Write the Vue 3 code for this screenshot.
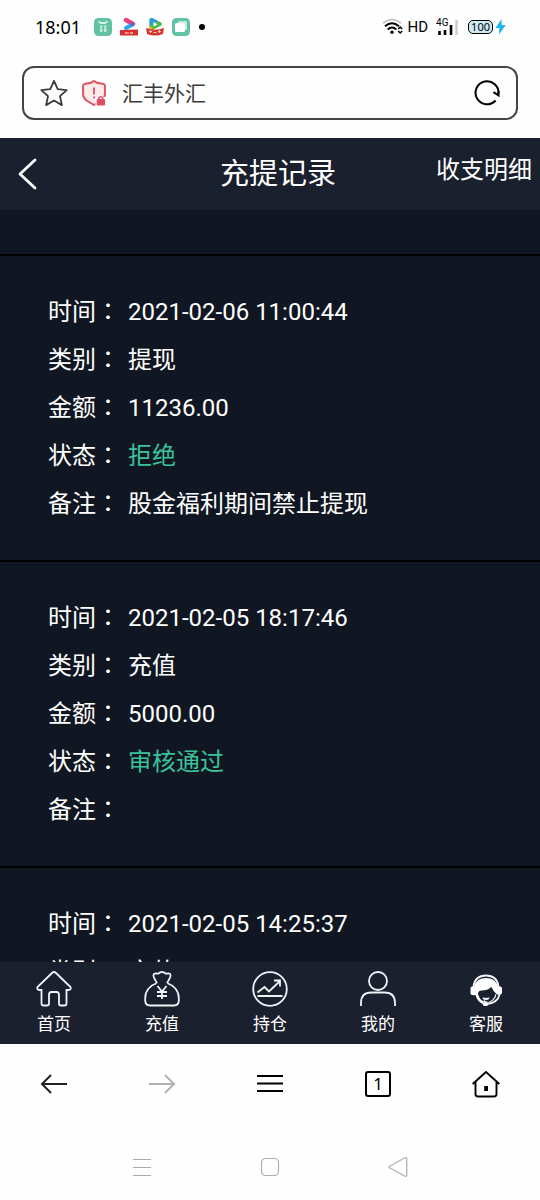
<script setup>
const records = [
  { time: '2021-02-06 11:00:44', type: '提现', amount: '11236.00', status: '拒绝', note: '股金福利期间禁止提现' },
  { time: '2021-02-05 18:17:46', type: '充值', amount: '5000.00', status: '审核通过', note: '' },
  { time: '2021-02-05 14:25:37', type: '充值' }
]

const fields = [
  { key: 'time', label: '时间' },
  { key: 'type', label: '类别' },
  { key: 'amount', label: '金额' },
  { key: 'status', label: '状态' },
  { key: 'note', label: '备注' }
]

const fieldsOf = (record) => fields.filter((field) => field.key in record)
</script>

<template>
  <div class="screen">
    <header class="status">
      <time class="clock">18:01</time>
      <div class="notices">
        <svg width="20" height="20" viewBox="0 0 20 20" aria-hidden="true">
          <rect x="1" y="1" width="18" height="18" rx="4.500" fill="#62c3a2" />
          <path d="M5.500 4.500l2.500 1.500h4l2.500-1.500" fill="none" stroke="#fff" stroke-width="1.300" />
          <path d="M7 9.500h2.500M11 9.500h2.500M7 12h2.500M11 12h2.500M7 14h2.500M11 14h2.500" stroke="#e4f6ef" stroke-width="1.400" />
        </svg>
        <svg width="20" height="20" viewBox="0 0 20 20" aria-hidden="true">
          <path d="M7 3l7 4" stroke="#ed3e78" stroke-width="4.500" stroke-linecap="round" />
          <path d="M13.500 7.500L7 11" stroke="#2aa5ee" stroke-width="4" stroke-linecap="round" />
          <path d="M11.500 5l4 2-3.500 2.500z" fill="#8a48c8" />
          <path d="M1 13l18-.5v6H1z" fill="#d3302f" />
          <path d="M6 16h2M9 15v2M11 16h3" stroke="#f6b9a8" stroke-width="1.300" />
        </svg>
        <svg width="20" height="20" viewBox="0 0 20 20" aria-hidden="true">
          <path d="M4.500 3q0-2.500 2.500-2l9 4.500q2 1.500 0 3l-9 5q-2.500.5-2.500-2z" fill="#51b84c" />
          <path d="M4.500 3q0-2.500 2.500-2l6 3-8.500 5z" fill="#2c9bdd" />
          <path d="M4.500 8l4 4.500-1.500 1q-2.500.5-2.500-2z" fill="#f5a422" />
          <path d="M8.500 5l4 2.200-4 2.300z" fill="#fff" />
          <path d="M1 11q9 3.500 18 0l-1 6q-8 3-16 0z" fill="#d5382d" />
          <path d="M4 14.500h3M8.500 15.500h3M13 14.500h3M5.500 13v3M14.500 13v3" stroke="#f8c7b5" stroke-width="1" />
        </svg>
        <svg width="20" height="20" viewBox="0 0 20 20" aria-hidden="true">
          <rect x="1" y="1" width="18" height="18" rx="4.500" fill="#62c3a2" />
          <rect x="7" y="4" width="9" height="9" rx="1.500" fill="#c8ebdd" />
          <rect x="4" y="6" width="10" height="9" rx="1.500" fill="#fff" />
        </svg>
        <i class="dot"></i>
      </div>
      <div class="signals">
        <svg width="22" height="18" viewBox="0 0 22 18" aria-hidden="true">
          <path d="M1 5q9-7 18 0" fill="none" stroke="#c8c8c8" stroke-width="1.800" />
          <path d="M3 8.200q7-6 14 0M5.700 11.500q4.300-4 8.600 0" fill="none" stroke="#000" stroke-width="2" />
          <circle cx="10" cy="14.300" r="1.700" />
          <path d="M16.200 11l2-2 2 2M16.200 13l2 2 2-2" fill="none" stroke="#000" stroke-width="1.500" />
        </svg>
        <span class="hd">HD</span>
        <span class="cell">
          <span class="gen">4G</span>
          <svg width="22" height="18" viewBox="0 0 22 18" aria-hidden="true">
            <path d="M3.500 17v-4M9 17v-5M15 17V7" stroke="#000" stroke-width="2.600" />
            <path d="M20.500 17V2" stroke="#ccc" stroke-width="2.400" />
          </svg>
        </span>
        <span class="power">
          <span class="battery">100</span>
          <svg width="11" height="16" viewBox="0 0 11 16" aria-hidden="true">
            <path d="M6.500 0L.5 9h3.800L4 15.500 10.800 6H6.700z" fill="#1fb6ee" />
          </svg>
        </span>
      </div>
    </header>

    <form class="address" @submit.prevent>
      <button type="button" class="plain" aria-label="收藏">
        <svg width="28" height="28" viewBox="0 0 28 28">
          <path d="M14 1.800l3.700 8.300 9 1-6.700 6.100 1.900 8.900-7.900-4.600-7.900 4.600L8 17.200 1.300 11.100l9-1z" fill="none" stroke="#3b3b3b" stroke-width="1.800" stroke-linejoin="round" />
        </svg>
      </button>
      <button type="button" class="plain shield" aria-label="网站安全信息">
        <svg width="24" height="26" viewBox="0 0 24 26">
          <path d="M12 1l3 1.700 6.500 1.300q1.500.3 1.400 2v8.500q-.2 3.500-3.500 5.500L12 25l-7.500-4.500Q1.300 18 1.100 14.500V6q0-1.700 1.500-2L9 2.700z" fill="#fdebec" stroke="#dd5364" stroke-width="2" />
          <path d="M12 7.500v7M12 16.500v2" stroke="#dd5364" stroke-width="1.800" />
          <rect x="13.500" y="17" width="10.500" height="9" fill="#fff" />
          <rect x="14.700" y="19" width="8.300" height="6.500" rx="1" fill="#e14c60" />
          <path d="M16.700 20v-2q2-2.500 4 0v2" fill="none" stroke="#e14c60" stroke-width="1.600" />
        </svg>
      </button>
      <input class="url" type="text" value="汇丰外汇" aria-label="网址" />
      <button type="button" class="plain" aria-label="刷新">
        <svg width="28" height="28" viewBox="0 0 28 28">
          <path d="M22.600 21.500A11.500 11.500 0 1 1 25.500 15" fill="none" stroke="#000" stroke-width="2" />
          <path d="M20.500 13.200l5 3.300V12" fill="none" stroke="#000" stroke-width="2" />
        </svg>
      </button>
    </form>

    <div class="titlebar">
      <button type="button" class="plain back" aria-label="返回">
        <svg width="20" height="32" viewBox="0 0 20 32">
          <path d="M17 2L2 16l15 14" fill="none" stroke="#fff" stroke-width="2.800" stroke-linecap="round" stroke-linejoin="round" />
        </svg>
      </button>
      <h1 class="title">充提记录</h1>
      <a class="detail" href="#">收支明细</a>
    </div>

    <main class="list">
      <dl v-for="record in records" :key="record.time" class="record">
        <div v-for="field in fieldsOf(record)" :key="field.key" class="row">
          <dt>{{ field.label }}<span class="colon">：</span></dt>
          <dd :class="{ state: field.key === 'status' }">{{ record[field.key] }}</dd>
        </div>
      </dl>
    </main>

    <nav class="tabs" aria-label="主导航">
      <a href="#">
        <svg width="36" height="36" viewBox="0 0 36 36">
          <path d="M18 1q1 0 2 1L34.500 16q1 3-2 3h-2v13.500q0 2-2 2H25q-2 0-2-2V24q0-3-2.500-3h-5Q13 21 13 24v8.500q0 2-2 2H7.500q-2 0-2-2V19h-2q-3 0-2-3L16 2q1-1 2-1z" />
        </svg>
        <span>首页</span>
      </a>
      <a href="#">
        <svg width="36" height="36" viewBox="0 0 36 36">
          <path d="M13 12C11 8.500 9 6 9.500 4q.5-2 3-1.500 1 .2 2 0Q16 1 18 1t3.500 1.500q1 .2 2 0 2.500-.5 3 1.500c.5 2-1.500 4.500-3.500 8M13 12C6 14.500 1.200 20 1.200 27v2.500q0 5 5 5h23.600q5 0 5-5V27c0-7-4.800-12.500-11.800-15" />
          <path d="M13.500 15L18 20.500l4.500-5.500M18 20.500V28M13 21h10M13 25h10" />
        </svg>
        <span>充值</span>
      </a>
      <a href="#">
        <svg width="36" height="36" viewBox="0 0 36 36">
          <circle cx="18" cy="18" r="16.800" />
          <path d="M5.500 21.500l7-5.500 4.500 4.500L28 10M22 9.500h6v6M5.500 25h25" />
        </svg>
        <span>持仓</span>
      </a>
      <a href="#">
        <svg width="36" height="36" viewBox="0 0 36 36">
          <circle cx="18" cy="10" r="9" />
          <path d="M1 35v-3q0-10.500 10.500-10.500h13Q35 21.500 35 32v3" />
        </svg>
        <span>我的</span>
      </a>
      <a href="#">
        <svg width="36" height="36" viewBox="0 0 36 36">
          <path d="M5.500 15.500Q7 4.500 18 4.500T30.500 15.500" />
          <path class="solid" d="M6.500 15Q8.500 7 18 7t11.500 8q4 0 4.500 2v5q-.5 2-3 2l-2.500-1Q25.500 21 23.500 16q-4 3.500-10 3.500-3 0-3.500 3 1 6 6 8l-1 2.500Q9 30.500 7.500 24q-5 1-5-2v-5q.5-2 4-2z" />
          <path class="solid" d="M27.500 23q-1.500 6-7 8-3-.5-5-2.500l1 3h5q6-2.500 7-8z" />
          <path d="M31.500 23.500Q30 31.500 19 33M15 27q3 2 6 0" />
          <ellipse class="solid" cx="17.500" cy="33" rx="2.800" ry="2" />
        </svg>
        <span>客服</span>
      </a>
    </nav>

    <div class="browser">
      <button type="button" class="plain" aria-label="后退">
        <svg width="28" height="28" viewBox="0 0 28 28"><path d="M27 14H2M11 5l-9 9 9 9" fill="none" stroke="#222" stroke-width="2" /></svg>
      </button>
      <button type="button" class="plain" aria-label="前进">
        <svg width="28" height="28" viewBox="0 0 28 28"><path d="M1 14h25M17 5l9 9-9 9" fill="none" stroke="#b2b2b2" stroke-width="2" /></svg>
      </button>
      <button type="button" class="plain" aria-label="菜单">
        <svg width="28" height="28" viewBox="0 0 28 28"><path d="M1 6h26M1 13.500h26M1 21h26" stroke="#000" stroke-width="2" /></svg>
      </button>
      <button type="button" class="plain" aria-label="标签页"><span class="count">1</span></button>
      <button type="button" class="plain" aria-label="主页">
        <svg width="28" height="28" viewBox="0 0 28 28">
          <path d="M.7 14L14 2l13.300 12M3.500 12v12q0 2.500 2.500 2.500h16q2.500 0 2.500-2.500V12" fill="none" stroke="#000" stroke-width="1.900" stroke-linejoin="round" />
          <path d="M12.200 16h3.800v5h-3.800z" />
        </svg>
      </button>
    </div>

    <div class="system">
      <button type="button" class="plain" aria-label="最近任务">
        <svg width="20" height="20" viewBox="0 0 20 20"><path d="M1 2.500h18M1 10.500h18M1 18.500h18" stroke="#aaa" stroke-width="1.200" /></svg>
      </button>
      <button type="button" class="plain" aria-label="桌面">
        <svg width="20" height="20" viewBox="0 0 20 20"><rect x="1.500" y="1.500" width="17" height="17" rx="4" fill="none" stroke="#b0b0b0" stroke-width="1.200" /></svg>
      </button>
      <button type="button" class="plain" aria-label="返回上一级">
        <svg width="20" height="20" viewBox="0 0 20 20"><path d="M1.500 9.200L17 .8q1.700-.5 1.700 1v16.400q0 1.500-1.700 1L1.500 10.800q-1-.8 0-1.600z" fill="none" stroke="#b0b0b0" stroke-width="1.300" /></svg>
      </button>
    </div>
  </div>
</template>

<style>
body {
  margin: 0;
  background: #fefefe;
}
</style>

<style scoped>
.screen {
  display: flex;
  flex-direction: column;
  height: 100vh;
  font-family: Roboto, "Noto Sans CJK SC", sans-serif;
  color: #fff;
  background: #fefefe;
}
.screen svg {
  display: block;
  flex: none;
}
.plain {
  display: flex;
  align-items: center;
  justify-content: center;
  padding: 0;
  border: 0;
  background: none;
  color: #000;
}
.status {
  display: flex;
  align-items: center;
  flex: none;
  height: 54px;
  padding: 0 34px 0 35px;
  font-family: "Noto Sans", sans-serif;
  color: #000;
}
.clock {
  font-size: 18px;
}
.notices {
  display: flex;
  align-items: center;
  gap: 6px;
  margin-left: 12px;
}
.dot {
  width: 6px;
  height: 6px;
  margin-left: 2px;
  border-radius: 50%;
  background: #000;
}
.signals {
  display: flex;
  align-items: center;
  gap: 4px;
  margin-left: auto;
}
.hd {
  font-family: Roboto, sans-serif;
  font-size: 15px;
}
.cell {
  position: relative;
  margin: 0 6px 0 4px;
}
.gen {
  position: absolute;
  top: 0;
  left: 0;
  font-family: Roboto, sans-serif;
  font-size: 10px;
  line-height: 10px;
}
.power {
  display: flex;
  align-items: center;
  gap: 2px;
}
.battery {
  padding: 0 2px;
  border: 1px solid #000;
  border-radius: 5px;
  background: #cdeaf3;
  font-size: 11px;
  line-height: 12px;
}
.address {
  display: flex;
  align-items: center;
  flex: none;
  box-sizing: border-box;
  height: 54px;
  margin: 12px 22px 18px;
  padding: 0 15px 0 16px;
  border: 2px solid #444;
  border-radius: 12px;
}
.shield {
  margin: 0 16px 0 14px;
}
.url {
  flex: 1;
  min-width: 0;
  padding: 0 0 2px;
  border: 0;
  outline: 0;
  background: none;
  font-family: "Noto Sans CJK SC", sans-serif;
  font-size: 21px;
  color: #3b3b3b;
}
.titlebar {
  display: grid;
  grid-template-columns: auto 1fr auto;
  align-items: center;
  flex: none;
  height: 72px;
  background: #1a202e;
}
.back {
  grid-area: 1 / 1;
  padding-left: 18px;
}
.title {
  grid-area: 1 / 1 / 2 / 4;
  margin: 0;
  padding-left: 16px;
  font-size: 29px;
  font-weight: 400;
  line-height: 40px;
  text-align: center;
}
.detail {
  grid-area: 1 / 3;
  padding: 0 8px 8px 0;
  font-size: 24px;
  line-height: 32px;
  color: #fff;
  text-decoration: none;
}
.list {
  flex: 1;
  min-height: 0;
  padding-top: 44px;
  overflow: hidden;
  background: #111722;
}
.record {
  margin: 0;
  padding: 32px 48px;
  border-top: 2px solid #000;
}
.row {
  display: flex;
  gap: 8px;
  font-size: 24px;
  line-height: 48px;
}
.row dd {
  margin: 0;
}
.row .state {
  color: #3bc29b;
}
.colon {
  font-family: "Noto Sans CJK TC", sans-serif;
  line-height: 24px;
}
.tabs {
  display: flex;
  flex: none;
  height: 82px;
  background: #1a202e;
}
.tabs a {
  display: flex;
  flex: 1;
  flex-direction: column;
  align-items: center;
  gap: 4px;
  padding-top: 9px;
  font-size: 17px;
  line-height: 26px;
  color: #fff;
  text-decoration: none;
}
.tabs path,
.tabs circle {
  fill: none;
  stroke: #f0f2f6;
  stroke-width: 1.800;
}
.tabs .solid {
  fill: #fff;
  stroke: none;
}
.browser {
  display: flex;
  flex: none;
  height: 80px;
}
.browser .plain {
  flex: 1;
}
.count {
  box-sizing: border-box;
  width: 26px;
  height: 26px;
  border: 2px solid #000;
  border-radius: 3px;
  font-family: "Noto Sans", sans-serif;
  font-size: 17px;
  line-height: 22px;
}
.system {
  display: flex;
  justify-content: center;
  align-items: center;
  flex: none;
  gap: 108px;
  box-sizing: border-box;
  height: 76px;
  padding-top: 10px;
}
</style>
